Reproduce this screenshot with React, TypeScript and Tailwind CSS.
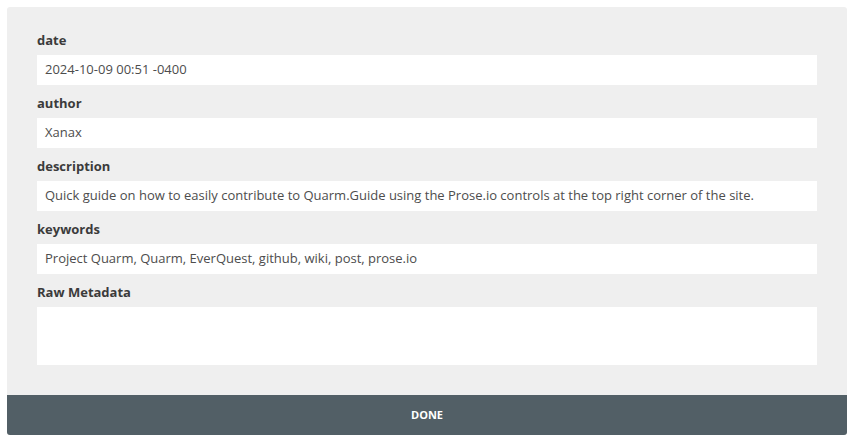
const fields = [
  { label: "date", value: "2024-10-09 00:51 -0400" },
  { label: "author", value: "Xanax" },
  {
    label: "description",
    value:
      "Quick guide on how to easily contribute to Quarm.Guide using the Prose.io controls at the top right corner of the site.",
  },
  { label: "keywords", value: "Project Quarm, Quarm, EverQuest, github, wiki, post, prose.io" },
];

export default function App() {
  return (
    <div className="min-h-screen bg-white p-[7px] font-['Open_Sans',sans-serif]">
      <div className="w-[840px] overflow-hidden rounded-[3px] bg-[#efefef]">
        <div className="px-[30px] pt-[24px] pb-[30px]">
          {fields.map((f, i) => (
            <div key={f.label} className={i === 0 ? "" : "mt-[9px]"}>
              <div className="mb-[6px] text-[13px] leading-[18px] font-bold text-[#3b3b3b]">{f.label}</div>
              <div className="flex h-[30px] items-center bg-white px-[8px] text-[13px] whitespace-nowrap text-[#4d4d4d]">
                {f.value}
              </div>
            </div>
          ))}
          {/* raw metadata */}
          <div className="mt-[9px]">
            <div className="mb-[6px] text-[13px] leading-[18px] font-bold text-[#3b3b3b]">Raw Metadata</div>
            <div className="h-[58px] bg-white" />
          </div>
        </div>
        <div className="flex h-[40px] items-center justify-center bg-[#525f66] text-[11px] font-bold text-white">
          DONE
        </div>
      </div>
    </div>
  );
}
